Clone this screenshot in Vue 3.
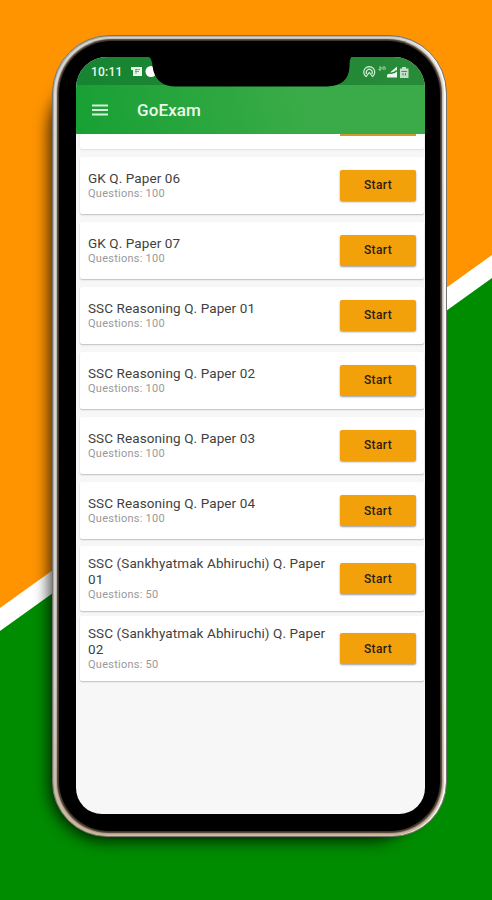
<script setup>
const papers = [
  { title: 'GK Q. Paper 06', count: 100 },
  { title: 'GK Q. Paper 07', count: 100 },
  { title: 'SSC Reasoning Q. Paper 01', count: 100 },
  { title: 'SSC Reasoning Q. Paper 02', count: 100 },
  { title: 'SSC Reasoning Q. Paper 03', count: 100 },
  { title: 'SSC Reasoning Q. Paper 04', count: 100 },
  { title: 'SSC (Sankhyatmak Abhiruchi) Q. Paper 01', count: 50, tall: true },
  { title: 'SSC (Sankhyatmak Abhiruchi) Q. Paper 02', count: 50, tall: true },
]
</script>

<template>
  <main class="stage">
    <svg class="backdrop" viewBox="0 0 492 900" width="492" height="900" aria-hidden="true">
      <rect width="492" height="900" fill="#ff9400" />
      <path d="M0 608 492 255V900H0Z" fill="#fff" />
      <path d="M0 631 492 278V900H0Z" fill="#008c00" />
    </svg>
    <div class="shade"></div>
    <div class="phone">
      <div class="bezel">
        <div class="screen">
          <header class="status">
            <span class="time">10:11</span>
            <svg class="left-icons" width="30" height="12" viewBox="0 0 30 12">
              <path d="M0 1H11V10H2V4H0Z" fill="#e9f6e9" />
              <path d="M4 3.500H9M4 5.500H8M5 3V8" stroke="#5a9d65" stroke-width=".8" fill="none" />
              <circle cx="20" cy="5.500" r="5.500" fill="#fff" />
            </svg>
            <svg class="right-icons" width="50" height="14" viewBox="0 0 50 14">
              <g fill="none" stroke="#d6edda" stroke-width="1.200">
                <path d="M3 11.500A5.500 5.500 0 1 1 9.500 11.500" />
                <path d="M3.800 9A3 3 0 1 1 8.800 9" />
                <path d="M2.800 12 6.300 7.500 9.800 12" />
              </g>
              <path d="M16 2H18V4H16V5H18M20 5V2H22V5" fill="none" stroke="#b5d9bb" stroke-width=".9" />
              <path d="M24 12.500V10L34 1.500V12.500Z" fill="#eaf7ec" />
              <path d="M25 7.500Q30 9.500 34 5.500" fill="none" stroke="#218135" stroke-width="1.500" />
              <path d="M37 3.500H39V2H43V3.500H45.500V13H37Z" fill="#c5dfc9" />
              <path d="M38.500 6.500H44M40 8V10.500M42.500 8V10.500" stroke="#448c50" fill="none" />
            </svg>
          </header>
          <div class="toolbar">
            <svg width="16" height="12" viewBox="0 0 16 12">
              <path d="M0 1.500H16M0 6H16M0 10.500H16" stroke="#d7f0da" stroke-width="2" />
            </svg>
            <h1>GoExam</h1>
          </div>
          <section class="list">
            <article class="card partial"><span class="clipped-button"></span></article>
            <article v-for="paper in papers" :key="paper.title" class="card" :class="{ tall: paper.tall }">
              <div class="copy">
                <h2>{{ paper.title }}</h2>
                <p>Questions: {{ paper.count }}</p>
              </div>
              <button type="button">Start</button>
            </article>
          </section>
        </div>
      </div>
      <svg class="notch" width="204" height="34" viewBox="0 0 204 34" aria-hidden="true">
        <path d="M0 0V3Q3 5 3.500 12Q6 32.500 27 32.500H178Q200 32 200.500 12Q200.500 5 202 4V0Z" fill="#000" />
      </svg>
    </div>
  </main>
</template>

<style>
body { margin: 0; }
</style>

<style scoped>
* { box-sizing: border-box; }
.stage {
  position: relative;
  width: 492px;
  height: 900px;
  overflow: hidden;
  padding: 35px 0 0 52px;
  font-family: Roboto, sans-serif;
}
.backdrop { position: absolute; inset: 0; }
.shade {
  position: absolute;
  left: 54px;
  top: 70px;
  width: 375px;
  height: 766px;
  border-radius: 56px;
  box-shadow: -4px 4px 15px 1px rgba(0, 0, 0, .75);
}
.phone {
  position: relative;
  width: 395px;
  height: 802px;
  padding: 5px 6px 5px 6px;
  border-radius: 58px 58px 55px 55px;
  border: 1px solid #77736e;
  background: linear-gradient(180deg, #e3dfd9 0, #d9d6d1 80%, #cbb79e 795px);
  box-shadow: inset 1px 1px 1px #a6a8a5, inset -2px 0 1px #fafbf8;
}
.bezel {
  width: 381px;
  height: 790px;
  padding: 16px 15px 17px 17px;
  border-radius: 53px 53px 50px 50px;
  background: #000;
  box-shadow: 0 0 1.500px 1.500px #3d3025;
}
.screen {
  width: 349px;
  height: 757px;
  overflow: hidden;
  border-radius: 31px 31px 26px 26px;
  background: #f7f7f7;
}
.status {
  display: flex;
  align-items: center;
  height: 28px;
  padding: 2px 12px 0 15px;
  background: linear-gradient(90deg, #168431, #288b38);
}
.time { width: 40px; color: #eef9ef; font-size: 12px; font-weight: 500; letter-spacing: .2px; }
.right-icons { margin-left: auto; }
.toolbar {
  display: flex;
  align-items: center;
  height: 49px;
  padding: 0 16px;
  gap: 29px;
  background: linear-gradient(75deg, #17a033, #3aab48 65%);
}
.toolbar h1 { margin: 1px 0 0; color: #edfaee; font-size: 17px; font-weight: 500; letter-spacing: .1px; }
.list { padding: 0 1px 0 4px; }
.card {
  display: flex;
  align-items: center;
  justify-content: space-between;
  height: 57px;
  margin-bottom: 8.100px;
  padding: 0 8px;
  border-radius: 2px;
  background: #fff;
  box-shadow: 0 1px 1.500px rgba(0, 0, 0, .23);
}
.card.partial { height: 14.500px; align-items: flex-start; justify-content: flex-end; box-shadow: 0 1px 2px rgba(0, 0, 0, .1); }
.clipped-button { width: 76px; height: 1.500px; background: #d3982d; }
.card.tall { height: 65px; margin-bottom: 5px; }
.card.tall:nth-last-child(2) { margin-top: -1px; }
.copy { width: 248px; }
.card h2 { margin: 0; color: #3f3f3f; font-size: 13.500px; line-height: 16px; font-weight: 400; letter-spacing: .1px; }
.card p { margin: 0; color: #999; font-size: 11px; line-height: 15px; letter-spacing: .25px; }
.card button {
  width: 76px;
  height: 31px;
  padding: 0;
  border: 0;
  border-radius: 2px;
  background: #f2a10b;
  box-shadow: 0 1px 2px rgba(0, 0, 0, .4);
  color: #2a2010;
  font: 500 12px Roboto, sans-serif;
  letter-spacing: .35px;
}
.notch {
  position: absolute;
  left: 96px;
  top: 18px;
}
</style>
